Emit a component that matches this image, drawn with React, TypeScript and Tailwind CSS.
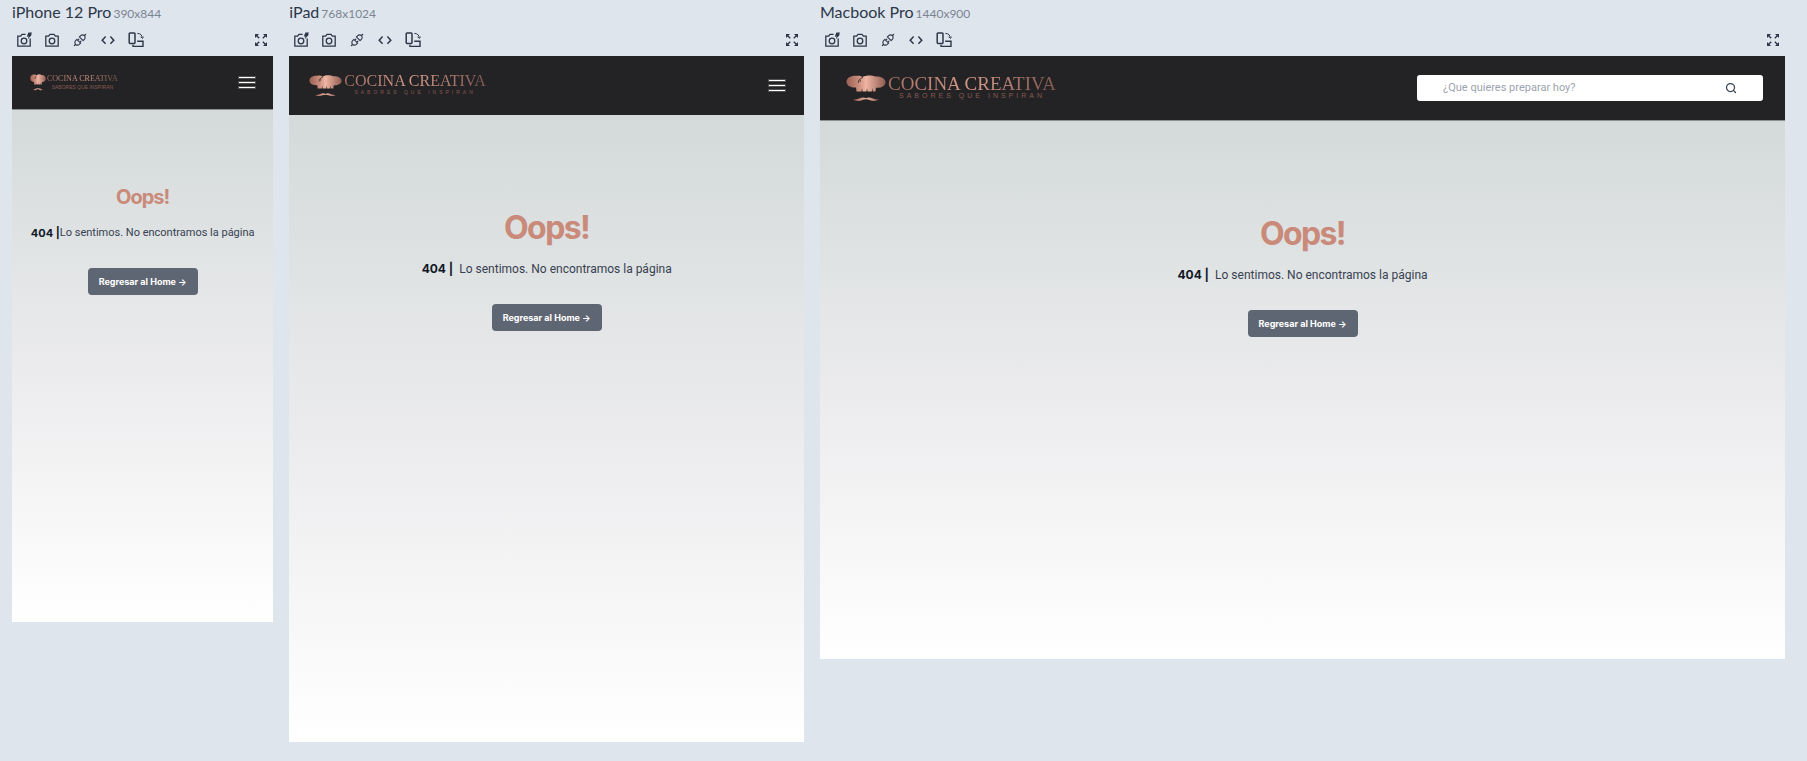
import { useId, type ReactNode } from "react";
import { AiOutlineApi } from "react-icons/ai";
import { Search } from "lucide-react";
import clsx from "clsx";

type Size = "phone" | "tablet" | "desktop";

function CameraShape() {
  return (
    <>
      <path d="M1.8 4.2H4.6L6 2.4H10L11.4 4.2H14.2V14.2H1.8Z" />
      <circle cx="8" cy="9" r="2.8" />
    </>
  );
}

function LineIcon({ children }: { children: ReactNode }) {
  return (
    <svg viewBox="0 0 16 16" className="size-4" fill="none" stroke="currentColor" strokeWidth="1.3" aria-hidden="true">
      {children}
    </svg>
  );
}

const tools: { label: string; icon: ReactNode }[] = [
  {
    label: "Quick screenshot",
    icon: (
      <LineIcon>
        <path d="M9.6 2.4H6L4.6 4.2H1.8V14.2H14.2V6.4" />
        <circle cx="8" cy="9" r="2.8" />
        <path d="M12.4 0.4H16L15 2.4H16L11.6 7.6L12.6 4.400H10.800Z" fill="currentColor" stroke="none" />
      </LineIcon>
    ),
  },
  { label: "Full screenshot", icon: <LineIcon><CameraShape /></LineIcon> },
  { label: "Disconnect", icon: <AiOutlineApi className="size-4" aria-hidden="true" /> },
  {
    label: "Open inspector",
    icon: <LineIcon><path d="M5.6 4.6L2.2 8.2L5.6 11.8M10.4 4.6L13.8 8.2L10.4 11.8" strokeWidth="1.5" /></LineIcon>,
  },
  {
    label: "Rotate",
    icon: (
      <LineIcon>
        <rect x="1.2" y="1" width="5.8" height="10.4" rx="0.8" strokeWidth="1.5" />
        <path d="M9.2 9.2H15V14.4H5V12.8" strokeWidth="1.4" />
        <path d="M9.4 1.4C12.4 1.4 14.2 3.2 14.2 6M12.6 4.8L14.2 6.4L15.8 4.8" strokeWidth="1" />
      </LineIcon>
    ),
  },
];

function ExpandIcon() {
  return (
    <svg viewBox="0 0 12 12" className="size-3" fill="currentColor" stroke="currentColor" aria-hidden="true">
      <path d="M0 0H4L0 4ZM12 0H8L12 4ZM0 12H4L0 8ZM12 12H8L12 8Z" stroke="none" />
      <path d="M1 1L4.2 4.2M11 1L7.8 4.2M1 11L4.2 7.8M11 11L7.8 7.8" strokeWidth="1.4" />
    </svg>
  );
}

function ChefHat({ className }: { className: string }) {
  const id = useId();
  return (
    <svg viewBox="0 0 40 27" preserveAspectRatio="none" className={className} aria-hidden="true">
      <defs>
        <linearGradient id={id}>
          <stop offset="0" stopColor="#9a6154" />
          <stop offset="0.3" stopColor="#c98b7b" />
          <stop offset="0.5" stopColor="#f0b5a4" />
          <stop offset="1" stopColor="#8f5d51" />
        </linearGradient>
      </defs>
      <g fill={`url(#${id})`}>
        <path d="M10 12.5C4.500 13 0.500 10.500 0.500 6.800C0.500 3 5 0.600 10 0.900C12.500 0.500 15 1 16.500 2C20 0 26 0 29 1.500C35 1 39.500 3.500 39.500 7.200C39.500 11 35.500 13 30 12.700L29.500 16.500H26.800L26.300 13L25.800 16.500H21.500L21 13L20.500 16.500H16.500L16 13L15.500 16.500H10.500Z" />
        <path d="M20 23.200C22 22 24.500 22.500 27 23.600C29.500 24.600 31.500 24.700 33 24.300C30.500 26.300 26.500 26.300 23.500 25C22 24.400 21 24.200 20 24.300C19 24.200 18 24.400 16.500 25C13.500 26.300 9.500 26.300 7 24.300C8.500 24.700 10.500 24.600 13 23.600C15.500 22.500 18 22 20 23.200Z" />
      </g>
      <path d="M17 2.500C13.500 3.500 12 5.500 12.500 8M14 7C13.800 6.200 14.200 5.200 15 4.700" fill="none" stroke="#232325" strokeWidth="0.800" />
    </svg>
  );
}

function Logo({ size }: { size: Size }) {
  return (
    <a
      href="#inicio"
      className={clsx("flex items-center", size === "phone" ? "gap-px" : "gap-0.5")}
    >
      <ChefHat
        className={clsx(
          size === "phone" && "h-[17px] w-4",
          size === "tablet" && "h-[22px] w-[33px]",
          size === "desktop" && "h-[27px] w-10",
        )}
      />
      <span className="flex flex-col items-center whitespace-nowrap">
        <span
          className={clsx(
            "bg-linear-to-r from-[#a56f62] via-[#d99c8c] to-[#7d564d] bg-clip-text font-['Liberation_Serif',serif] text-transparent",
            size === "phone" && "text-[8px] leading-2",
            size === "tablet" && "text-[16px] leading-3",
            size === "desktop" && "text-[19px] leading-4",
          )}
        >
          COCINA CREATIVA
        </span>
        <span
          className={clsx(
            "font-['Liberation_Sans',sans-serif] text-[#87594f]",
            size === "phone" && "text-[5px] leading-2",
            size === "tablet" && "text-[5px] leading-[10px] tracking-[3px]",
            size === "desktop" && "text-[7px] leading-2 tracking-[3px]",
          )}
        >
          SABORES QUE INSPIRAN
        </span>
      </span>
    </a>
  );
}

function NavBar({ size }: { size: Size }) {
  return (
    <header
      className={clsx(
        "flex items-center justify-between bg-[#232325]",
        size === "phone" && "h-[54px] border-b border-[#8d9090] px-[18px]",
        size === "tablet" && "h-[59px] pr-[19px] pl-5",
        size === "desktop" && "h-[65px] border-b border-[#8d9090] pr-[22px] pl-[26px]",
      )}
    >
      <Logo size={size} />
      {size === "desktop" ? (
        <form role="search" className="flex h-[26px] w-[346px] items-center rounded-[3px] bg-white px-[26px]">
          <input
            type="search"
            aria-label="Buscar receta"
            placeholder="¿Que quieres preparar hoy?"
            className="min-w-0 flex-1 bg-transparent font-['Roboto',sans-serif] text-[11px] leading-4 outline-none placeholder:text-[#9ca3af]"
          />
          <button type="button" aria-label="Buscar" className="text-[#374151]">
            <Search className="size-3" strokeWidth={2.5} />
          </button>
        </form>
      ) : (
        <button type="button" aria-label="Abrir menú" className="flex w-4 flex-col gap-[3px]">
          <span className="h-px w-full bg-white outline outline-white/20" />
          <span className="mt-px h-px w-full bg-white outline outline-white/20" />
          <span className="mt-px h-px w-full bg-white outline outline-white/20" />
        </button>
      )}
    </header>
  );
}

function NotFound({ size }: { size: Size }) {
  const phone = size === "phone";
  return (
    <main
      className={clsx(
        "flex flex-1 flex-col items-center bg-linear-to-b from-[#d4dad9] via-[#ebebed] to-white",
        phone ? "pt-[75px]" : "pt-[97px]",
      )}
    >
      <h1
        className={clsx(
          "font-bold tracking-tighter text-[#c98a79]",
          phone ? "text-[20px] leading-6" : "text-[32px] leading-8",
        )}
      >
        Oops!
      </h1>
      <p
        className={clsx(
          "flex whitespace-nowrap text-[#374151]",
          phone ? "mt-[15px] text-[11px] leading-[18px]" : "mt-4 gap-1.5 text-[12px] leading-[18px]",
        )}
      >
        <strong className="font-bold text-[#111827]">404 |</strong>
        <span className="font-['Roboto',sans-serif]">Lo sentimos. No encontramos la página</span>
      </p>
      <a
        href="#inicio"
        className="mt-[26px] flex h-[27px] w-[110px] items-center justify-center rounded bg-[#5f6673] text-[9px] font-bold whitespace-nowrap text-white"
      >
        Regresar al Home →
      </a>
    </main>
  );
}

function Device({ name, dims, size }: { name: string; dims: string; size: Size }) {
  return (
    <section className="min-w-0">
      <h2 className="flex h-6 items-baseline gap-0.5 font-['Lato',sans-serif] text-base leading-6 text-[#2d3748]">
        {name}
        <span className="text-xs text-[#7b8491]">{dims}</span>
      </h2>
      <div className="flex h-8 items-center justify-between pr-1.5 pl-1 text-[#2d3748]">
        <div className="flex gap-3">
          {tools.map((tool) => (
            <button key={tool.label} type="button" aria-label={tool.label}>
              {tool.icon}
            </button>
          ))}
        </div>
        <button type="button" aria-label="Expand">
          <ExpandIcon />
        </button>
      </div>
      <div
        className={clsx(
          "flex flex-col overflow-hidden font-['Inter',sans-serif]",
          size === "phone" && "aspect-[390/844]",
          size === "tablet" && "aspect-[768/1024]",
          size === "desktop" && "aspect-[1440/900]",
        )}
      >
        <NavBar size={size} />
        <NotFound size={size} />
      </div>
    </section>
  );
}

export default function App() {
  return (
    <div className="min-h-screen bg-[#dee5ed] pr-[22px] pl-3">
      <div className="grid grid-cols-[390fr_768fr_1440fr] items-start gap-4">
        <Device name="iPhone 12 Pro" dims="390x844" size="phone" />
        <Device name="iPad" dims="768x1024" size="tablet" />
        <Device name="Macbook Pro" dims="1440x900" size="desktop" />
      </div>
    </div>
  );
}
